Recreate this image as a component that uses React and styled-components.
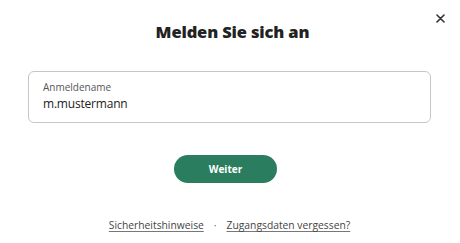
import React from "react";
import styled, { createGlobalStyle } from "styled-components";

const Global = createGlobalStyle`
  html, body { margin: 0; padding: 0; background: #fff; }
  body { font-family: "Open Sans", "Noto Sans", sans-serif; color: #333; }
`;

const Dialog = styled.div`
  width: 460px;
  height: 243px;
  box-sizing: border-box;
  padding: 0 29px 0 28px;
  display: flex;
  flex-direction: column;
`;

const Header = styled.div`
  display: grid;
  grid-template-columns: 1fr auto 1fr;
  align-items: start;
  margin: 0 -29px 0 -28px;
  padding: 20px 15px 0 15px;
`;

const Title = styled.h1`
  grid-column: 2;
  margin: 0 0 0 5px;
  font-size: 16.5px;
  line-height: 24px;
  font-weight: 800;
  color: #222;
  letter-spacing: -0.15px;
`;

const Close = styled.button`
  grid-column: 3;
  justify-self: end;
  margin-top: -6px;
  width: 9px;
  height: 9px;
  padding: 0;
  border: 0;
  background: none;
  display: flex;
  align-items: center;
  justify-content: center;
`;

const Field = styled.label`
  margin-top: 27px;
  height: 52px;
  box-sizing: border-box;
  border: 1px solid #c6c6c6;
  border-radius: 6px;
  padding: 9px 14px 0;
  display: flex;
  flex-direction: column;
`;

const FieldLabel = styled.span`
  font-size: 10px;
  line-height: 13px;
  color: #555;
`;

const FieldValue = styled.span`
  font-size: 12px;
  line-height: 20px;
  font-weight: 500;
  letter-spacing: -0.2px;
  color: #222;
`;

const Actions = styled.div`
  margin-top: 32px;
  display: flex;
  justify-content: center;
  padding-right: 8px;
`;

const Primary = styled.button`
  width: 103px;
  height: 28px;
  border: 0;
  border-radius: 14px;
  background: #2a7d5e;
  color: #fff;
  font-family: inherit;
  font-weight: 700;
  font-size: 10px;
`;

const Links = styled.div`
  margin-top: 35px;
  display: flex;
  justify-content: center;
  align-items: center;
  gap: 10px;
  font-size: 10.3px;
  color: #444;
`;

const Link = styled.a`
  color: #444;
  text-decoration: underline;
  text-decoration-color: #777;
  text-underline-offset: 2px;
`;

const Dot = styled.span`
  color: #666;
`;

export default function App() {
  return (
    <>
      <Global />
      <Dialog>
        <Header>
          <Title>Melden Sie sich an</Title>
          <Close aria-label="Schließen">
            <svg width="9" height="9" viewBox="0 0 9 9">
              <path d="M1 1L8 8M8 1L1 8" stroke="#333" strokeWidth="1.6" strokeLinecap="round" />
            </svg>
          </Close>
        </Header>
        <Field>
          <FieldLabel>Anmeldename</FieldLabel>
          <FieldValue>m.mustermann</FieldValue>
        </Field>
        <Actions>
          <Primary>Weiter</Primary>
        </Actions>
        <Links>
          <Link href="#">Sicherheitshinweise</Link>
          <Dot>·</Dot>
          <Link href="#">Zugangsdaten vergessen?</Link>
        </Links>
      </Dialog>
    </>
  );
}
